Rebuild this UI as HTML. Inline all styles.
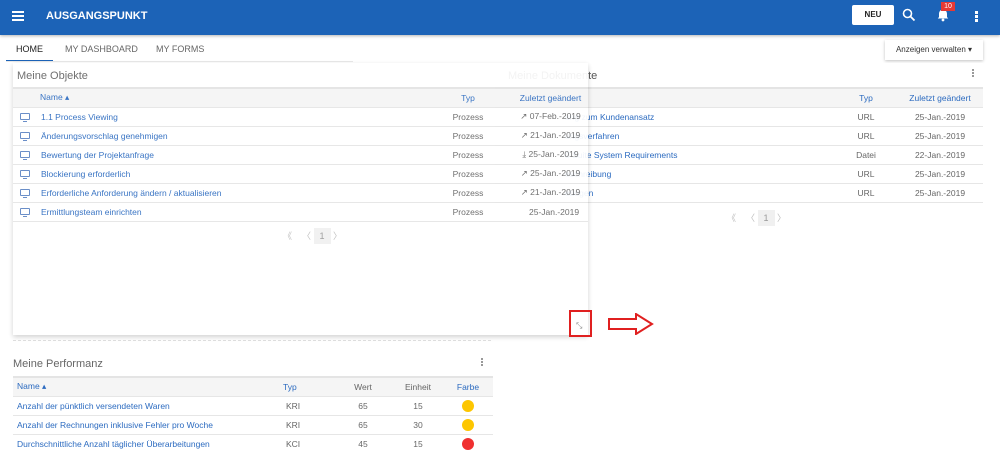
<!DOCTYPE html>
<html><head><meta charset="utf-8"><style>
*{box-sizing:border-box;margin:0;padding:0}
body{width:1000px;height:455px;overflow:hidden;background:#fff;font-family:"Liberation Sans",sans-serif;font-size:8.5px;color:#555;position:relative}
.hdr{position:absolute;left:0;top:0;width:1000px;height:35px;background:#1c63b7;box-shadow:0 1px 3px rgba(0,0,0,.3)}
.abs{position:absolute}
.tabs{position:absolute;top:35px;left:0;width:1000px;height:28px}
.tab{position:absolute;top:9px;font-size:9px;color:#666}
.card{position:absolute;background:#fff}
.title{position:absolute;font-size:11px;color:#666}
table{border-collapse:collapse;position:absolute;font-size:8.5px;table-layout:fixed}
th{background:#f5f5f5;color:#2c6bc0;font-weight:normal;height:19px;border-top:2px solid #e4e4e4;text-align:left}
td{height:19px;border-top:1px solid #e6e6e6;color:#666;white-space:nowrap;overflow:hidden}
td.l{color:#2c6bc0}
.c{text-align:center}
.mon{display:inline-block;width:10px;height:7px;border:1px solid #5f86c4;border-radius:1px;margin:0 11px 0 7px;position:relative;top:0}
.mon:after{content:"";position:absolute;left:2px;bottom:-3px;width:4px;height:1px;background:#5f86c4}
.dot{display:inline-block;width:12px;height:12px;border-radius:50%}
.pg{position:absolute;font-size:9px;color:#bbb}
.kebab{position:absolute;width:2px;height:2px;background:#999;box-shadow:0 3px 0 #999,0 6px 0 #999}
</style></head><body>
<div class="hdr">
 <div class="abs" style="left:12px;top:11px;width:12px;height:2px;background:#fff;box-shadow:0 4px 0 #fff,0 8px 0 #fff"></div>
 <div class="abs" style="left:46px;top:10px;color:#fff;font-weight:bold;font-size:11px">AUSGANGSPUNKT</div>
 <div class="abs" style="left:852px;top:5px;width:42px;height:20px;background:#fff;border-radius:2px;color:#222;font-weight:bold;font-size:8px;text-align:center;line-height:20px">NEU</div>
 <svg class="abs" style="left:902px;top:8px" width="14" height="14" viewBox="0 0 14 14"><circle cx="5.5" cy="5.5" r="4" fill="none" stroke="#fff" stroke-width="1.6"/><path d="M8.5 8.5L12.5 12.5" stroke="#fff" stroke-width="1.8"/></svg>
 <svg class="abs" style="left:936px;top:8px" width="14" height="14" viewBox="0 0 14 14"><path d="M7 1.5c-2.5 0-4 2-4 4.5v3L1.8 10.5h10.4L11 9V6c0-2.5-1.5-4.5-4-4.5z" fill="#fff"/><circle cx="7" cy="12" r="1.4" fill="#fff"/></svg>
 <div class="abs" style="left:941px;top:2px;width:14px;height:9px;background:#e53935;color:#fff;font-size:7px;text-align:center;line-height:9px">10</div>
 <div class="kebab" style="left:975px;top:11px;background:#fff;box-shadow:0 4px 0 #fff,0 8px 0 #fff;width:3px;height:3px"></div>
</div>
<div class="tabs">
 <div class="tab" style="left:16px;color:#222">HOME</div>
 <div class="abs" style="left:6px;top:25px;width:47px;height:2px;background:#1c63b7"></div>
 <div class="tab" style="left:65px">MY DASHBOARD</div>
 <div class="tab" style="left:156px">MY FORMS</div>
 <div class="abs" style="left:6px;top:26px;width:347px;height:1px;background:#e8e8e8"></div>
 <div class="abs" style="left:885px;top:5px;width:98px;height:20px;background:#fff;box-shadow:0 1px 3px rgba(0,0,0,.25);font-size:8px;color:#333;line-height:20px;text-align:center">Anzeigen verwalten ▾</div>
</div>

<div class="card" style="left:495px;top:63px;width:488px;height:170px">
 <div class="title" style="left:13px;top:7px;color:#555">Meine Dokumente</div>
 <div class="kebab" style="left:477px;top:6px"></div>
 <table style="left:0;top:24px;width:488px">
  <tr><th style="width:340px"></th><th class="c" style="width:62px">Typ</th><th class="c">Zuletzt geändert</th></tr>
  <tr><td class="l" style="padding-left:70px">ung zum Kundenansatz</td><td class="c">URL</td><td class="c">25-Jan.-2019</td></tr>
  <tr><td class="l" style="padding-left:70px">ungsverfahren</td><td class="c">URL</td><td class="c">25-Jan.-2019</td></tr>
  <tr><td class="l" style="padding-left:70px">0 Suite System Requirements</td><td class="c">Datei</td><td class="c">22-Jan.-2019</td></tr>
  <tr><td class="l" style="padding-left:70px">eschreibung</td><td class="c">URL</td><td class="c">25-Jan.-2019</td></tr>
  <tr><td class="l" style="padding-left:70px;border-bottom:1px solid #e6e6e6">ebogen</td><td class="c" style="border-bottom:1px solid #e6e6e6">URL</td><td class="c" style="border-bottom:1px solid #e6e6e6">25-Jan.-2019</td></tr>
 </table>
 <div class="pg" style="left:232px;top:148px">《 &nbsp;&nbsp; 〈 <span style="background:#f0f0f0;color:#999;padding:3px 6px">1</span> 〉</div>
</div>

<div class="card" style="left:13px;top:63px;width:575px;height:272px;box-shadow:0 2px 5px rgba(0,0,0,.2);opacity:.93">
 <div class="title" style="left:4px;top:7px">Meine Objekte</div>
 <table style="left:0;top:24px;width:575px">
  <tr><th style="width:410px;padding-left:27px">Name ▴</th><th class="c" style="width:90px">Typ</th><th class="c">Zuletzt geändert</th></tr>
  <tr><td class="l"><span class="mon"></span>1.1 Process Viewing</td><td class="c">Prozess</td><td class="c">↗ 07-Feb.-2019</td></tr>
  <tr><td class="l"><span class="mon"></span>Änderungsvorschlag genehmigen</td><td class="c">Prozess</td><td class="c">↗ 21-Jan.-2019</td></tr>
  <tr><td class="l"><span class="mon"></span>Bewertung der Projektanfrage</td><td class="c">Prozess</td><td class="c">⤓ 25-Jan.-2019</td></tr>
  <tr><td class="l"><span class="mon"></span>Blockierung erforderlich</td><td class="c">Prozess</td><td class="c">↗ 25-Jan.-2019</td></tr>
  <tr><td class="l"><span class="mon"></span>Erforderliche Anforderung ändern / aktualisieren</td><td class="c">Prozess</td><td class="c">↗ 21-Jan.-2019</td></tr>
  <tr><td class="l" style="border-bottom:1px solid #e6e6e6"><span class="mon"></span>Ermittlungsteam einrichten</td><td class="c" style="border-bottom:1px solid #e6e6e6">Prozess</td><td class="c" style="border-bottom:1px solid #e6e6e6">&nbsp;&nbsp;&nbsp;25-Jan.-2019</td></tr>
 </table>
 <div class="pg" style="left:270px;top:166px">《 &nbsp;&nbsp; 〈 <span style="background:#f0f0f0;color:#999;padding:3px 6px">1</span> 〉</div>
</div>
<div class="abs" style="left:13px;top:340px;width:478px;border-top:1px dashed #ddd"></div>

<div class="abs" style="left:569px;top:310px;width:23px;height:27px;border:2px solid #e02020"></div>
<div class="abs" style="left:576px;top:321px;font-size:8px;color:#888">⤡</div>
<svg class="abs" style="left:608px;top:313px" width="46" height="22" viewBox="0 0 46 22"><path d="M1 6H28V1L44 11L28 21V16H1Z" fill="#fff" stroke="#e02020" stroke-width="2"/></svg>

<div class="card" style="left:13px;top:352px;width:480px;height:103px">
 <div class="title" style="left:0;top:6px">Meine Performanz</div>
 <div class="kebab" style="left:468px;top:6px"></div>
 <table style="left:0;top:24px;width:480px">
  <tr><th style="width:270px;padding-left:4px">Name ▴</th><th style="width:50px">Typ</th><th class="c" style="width:60px;color:#666">Wert</th><th class="c" style="width:50px;color:#666">Einheit</th><th class="c">Farbe</th></tr>
  <tr><td class="l" style="padding-left:4px">Anzahl der pünktlich versendeten Waren</td><td style="padding-left:3px">KRI</td><td class="c">65</td><td class="c">15</td><td class="c"><span class="dot" style="background:#fdc600;vertical-align:middle"></span></td></tr>
  <tr><td class="l" style="padding-left:4px">Anzahl der Rechnungen inklusive Fehler pro Woche</td><td style="padding-left:3px">KRI</td><td class="c">65</td><td class="c">30</td><td class="c"><span class="dot" style="background:#fdc600;vertical-align:middle"></span></td></tr>
  <tr><td class="l" style="padding-left:4px">Durchschnittliche Anzahl täglicher Überarbeitungen</td><td style="padding-left:3px">KCI</td><td class="c">45</td><td class="c">15</td><td class="c"><span class="dot" style="background:#f03030;vertical-align:middle"></span></td></tr>
 </table>
</div>
</body></html>
